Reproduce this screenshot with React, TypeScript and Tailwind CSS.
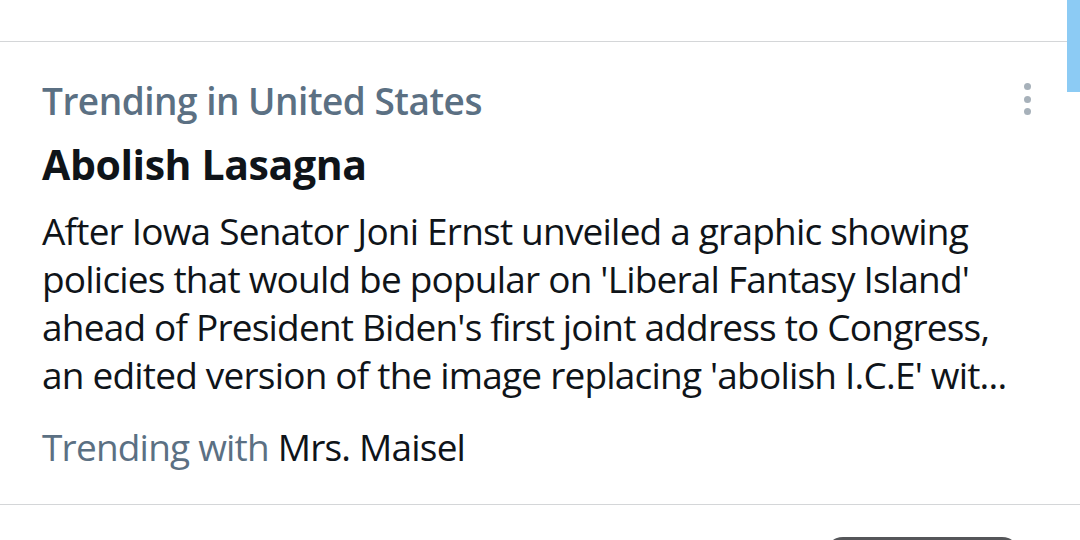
export default function App() {
  return (
    <div
      className="relative h-[540px] w-[1080px] overflow-hidden bg-white"
      style={{ fontFamily: '"Open Sans", "Noto Sans", sans-serif' }}
    >
      <div className="h-[41px]" />
      <div className="h-px bg-[#d4d6d8]" />
      <div className="flex items-start justify-between pl-[42px] pr-[49px] pt-[36px]">
        <div className="flex flex-col whitespace-nowrap">
          <p className="text-[37px] font-semibold leading-[46px] tracking-[-0.5px] text-[#5b7083]">
            Trending in United States
          </p>
          <p className="mt-[16px] text-[41px] font-bold leading-[48px] tracking-[-0.4px] text-[#0f1419]">
            Abolish Lasagna
          </p>
          <p className="mt-[19px] text-[37px] leading-[48px] tracking-[-0.8px] text-[#0f1419]">
            After Iowa Senator Joni Ernst unveiled a graphic showing
            <br />
            policies that would be popular on 'Liberal Fantasy Island'
            <br />
            ahead of President Biden's first joint address to Congress,
            <br />
            an edited version of the image replacing 'abolish I.C.E' wit...
          </p>
          <p className="mt-[24px] text-[37px] leading-[48px] tracking-[-0.8px] text-[#5b7083]">
            Trending with <span className="text-[#0f1419]">Mrs. Maisel</span>
          </p>
        </div>
        <div className="mt-[5px] flex shrink-0 flex-col items-center gap-[5.5px]">
          <span className="h-[7px] w-[7px] rounded-full bg-[#a7b1ba]" />
          <span className="h-[7px] w-[7px] rounded-full bg-[#a7b1ba]" />
          <span className="h-[7px] w-[7px] rounded-full bg-[#a7b1ba]" />
        </div>
      </div>
      <div className="mt-[33px] h-px bg-[#d4d6d8]" />
      <div className="flex justify-end pr-[60px] pt-[32px]">
        <div className="h-[20px] w-[195px] rounded-t-[18px] bg-[#555659]" />
      </div>
      <div className="absolute right-0 top-0 h-[92px] w-[13px] bg-[#8ccbf4]" />
    </div>
  );
}
